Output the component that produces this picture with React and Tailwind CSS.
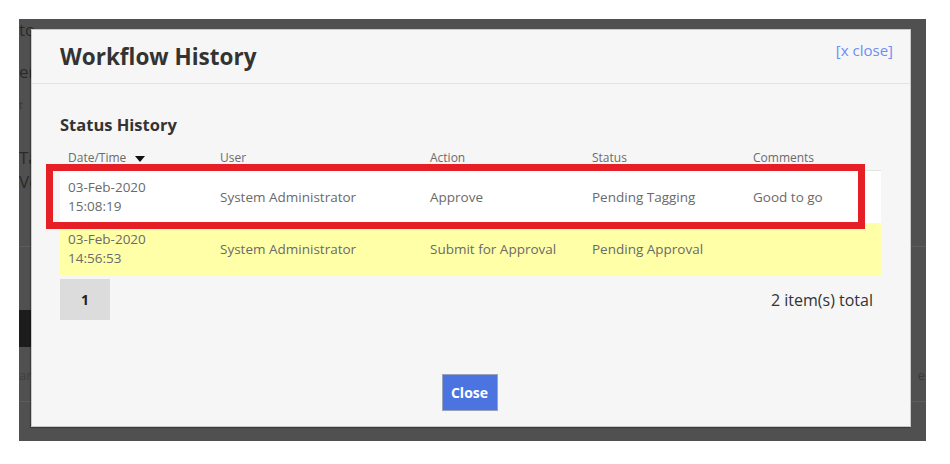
import React from 'react';

const FONT = { fontFamily: '"Open Sans", "Noto Sans", Arial, sans-serif' };

const COLUMNS = [
  { key: 'date', label: 'Date/Time', width: 'w-[152px]' },
  { key: 'user', label: 'User', width: 'w-[210px]' },
  { key: 'action', label: 'Action', width: 'w-[162px]' },
  { key: 'status', label: 'Status', width: 'w-[161px]' },
  { key: 'comments', label: 'Comments', width: 'flex-1' },
];

const ROWS = [
  {
    date: '03-Feb-2020',
    time: '15:08:19',
    user: 'System Administrator',
    action: 'Approve',
    status: 'Pending Tagging',
    comments: 'Good to go',
    bg: 'bg-white',
  },
  {
    date: '03-Feb-2020',
    time: '14:56:53',
    user: 'System Administrator',
    action: 'Submit for Approval',
    status: 'Pending Approval',
    comments: '',
    bg: 'bg-[#ffffa8]',
  },
];

function BackdropPage() {
  // faint bits of the page underneath the overlay
  return (
    <div className="absolute inset-0 overflow-hidden text-[#2a2a2a]">
      <span className="absolute left-[0px] top-[2px] text-[17px] leading-none">to</span>
      <span className="absolute left-[0px] top-[44px] text-[17px] leading-none">er</span>
      <span className="absolute left-[0px] top-[80px] text-[11px] leading-none text-[#3a3a3a]">t</span>
      <span className="absolute left-[0px] top-[130px] text-[17px] leading-none">Ta</span>
      <span className="absolute left-[0px] top-[154px] text-[17px] leading-none">Ve</span>
      <div className="absolute left-0 right-0 top-[227px] h-px bg-[#5c5c5c]" />
      <div className="absolute left-0 top-[291px] h-[37px] w-[12px] bg-[#1c1c1c]" />
      <span className="absolute left-[0px] top-[350px] text-[13px] leading-none text-[#3f3f3f]">ar</span>
      <div className="absolute left-0 right-0 top-[382px] h-px bg-[#5c5c5c]" />
      <span className="absolute right-[1px] top-[350px] text-[13px] leading-none text-[#3a3a3a]">e</span>
    </div>
  );
}

function HistoryTable() {
  return (
    <div className="w-[821px]">
      <div className="flex h-[24px] items-center text-[12px] text-[#6b6b6b]">
        {COLUMNS.map((col) => (
          <div key={col.key} className={`${col.width} flex items-center pl-[8px]`}>
            {col.label}
            {col.key === 'date' && (
              <svg className="ml-[9px] mt-px" width="10" height="6" viewBox="0 0 10 6">
                <path d="M0 0 L10 0 L5 6 Z" fill="#111" />
              </svg>
            )}
          </div>
        ))}
      </div>
      <div className="h-px bg-[#e4e4e4]" />
      {ROWS.map((row, i) => (
        <div key={i} className={`flex h-[52px] items-center text-[13.5px] text-[#6a6a6a] ${row.bg}`}>
          <div className="w-[152px] pl-[8px] leading-[19px]">
            <div>{row.date}</div>
            <div>{row.time}</div>
          </div>
          <div className="w-[210px] pl-[8px]">{row.user}</div>
          <div className="w-[162px] pl-[8px]">{row.action}</div>
          <div className="w-[161px] pl-[8px]">{row.status}</div>
          <div className="flex-1 pl-[8px]">{row.comments}</div>
        </div>
      ))}
    </div>
  );
}

export default function App() {
  return (
    <div className="h-[464px] w-[950px] bg-white" style={FONT}>
      <div className="pl-[19px] pt-[19px]">
        <div className="relative h-[422px] w-[907px] bg-[#505050] pl-[12px] pt-[10px]">
          <BackdropPage />

          {/* modal */}
          <div className="relative flex h-[398px] w-[880px] flex-col border border-[#c9c9c9] bg-[#f6f6f6] shadow-[-1px_1px_1px_rgba(0,0,0,0.25)]">
            <div className="flex h-[54px] shrink-0 items-start justify-between border-b border-[#e3e3e3] pl-[28px] pr-[17px]">
              <h1 className="mt-[12px] text-[22.5px] font-bold leading-[30px] text-[#333]">Workflow History</h1>
              <a className="mt-[10px] text-[15px] leading-[20px] text-[#6d8ef4]">[x close]</a>
            </div>

            <div className="flex flex-1 flex-col pl-[28px]">
              <h2 className="mt-[30px] text-[16.5px] font-bold leading-[22px] text-[#333]">Status History</h2>
              <div className="mt-[10px]">
                <HistoryTable />
              </div>

              <div className="mt-[4px] flex w-[821px] items-center justify-between">
                <div className="flex h-[41px] w-[50px] items-center justify-center bg-[#dcdcdc] text-[14px] font-bold text-[#222]">
                  1
                </div>
                <span className="pr-[8px] text-[16px] text-[#333]">2 item(s) total</span>
              </div>

              <div className="mt-[54px] flex w-[821px] justify-center">
                <button className="ml-[-2px] h-[37px] w-[56px] border border-[#9aa3b8] bg-[#4b74e0] text-[14px] font-bold text-white">
                  Close
                </button>
              </div>
            </div>
          </div>

          {/* red annotation box */}
          <div className="pointer-events-none absolute left-[27px] top-[145px] h-[65px] w-[819px] border-[7px] border-[#e61e26]" />
        </div>
      </div>
    </div>
  );
}
